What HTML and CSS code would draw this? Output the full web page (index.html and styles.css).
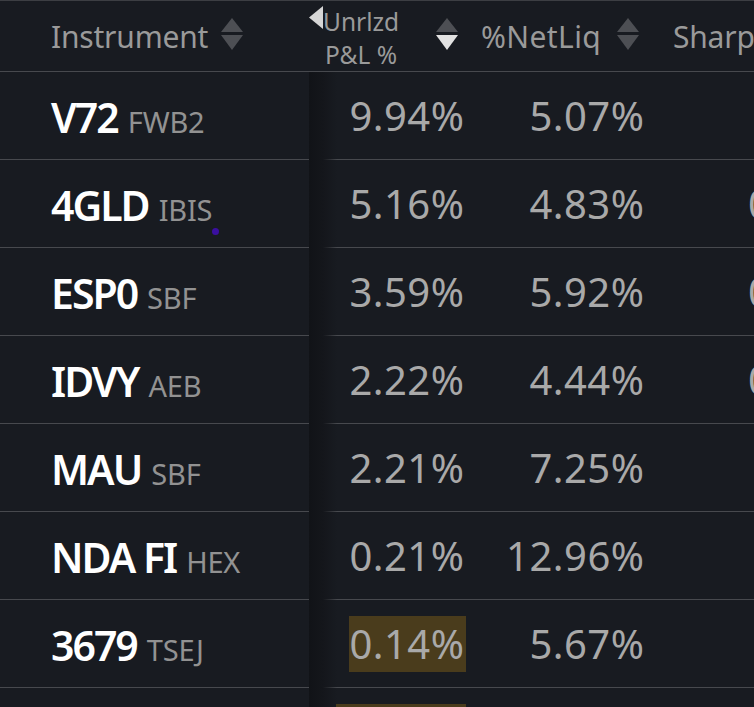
FILE: index.html
```html
<!DOCTYPE html>
<html>
<head>
<meta charset="utf-8">
<link rel="stylesheet" href="styles.css">
</head>
<body>
<div class="table">
  <div class="shadow"></div>
  <div class="row head">
    <div class="hcell first">
      <span class="htext">Instrument</span>
      <svg class="sort" width="22" height="33" viewBox="0 0 22 33"><polygon points="11,0 22,14 0,14" class="dim"/><polygon points="0,17 22,17 11,32" class="dim"/></svg>
    </div>
    <div class="hcell c1">
      <svg class="collapse" width="14" height="23" viewBox="0 0 14 23"><polygon points="14,0 14,23 0,11.5"/></svg>
      <span class="htext two">Unrlzd<br>P&amp;L %</span>
      <svg class="sort" width="22" height="33" viewBox="0 0 22 33"><polygon points="11,0 22,14 0,14" class="dim"/><polygon points="0,17 22,17 11,32" class="lit"/></svg>
    </div>
    <div class="hcell c2">
      <span class="htext">%NetLiq</span>
      <svg class="sort" width="22" height="33" viewBox="0 0 22 33"><polygon points="11,0 22,14 0,14" class="dim"/><polygon points="0,17 22,17 11,32" class="dim"/></svg>
    </div>
    <div class="hcell c3"><span class="htext">Sharpe</span></div>
  </div>

  <div class="row">
    <div class="cell first"><span class="sym">V72</span><span class="exch">FWB2</span></div>
    <div class="cell num"><span class="val">9.94%</span></div>
    <div class="cell num"><span class="val">5.07%</span></div>
    <div class="cell c3"></div>
  </div>
  <div class="row">
    <div class="cell first"><span class="sym">4GLD</span><span class="exch">IBIS</span><span class="dot"></span></div>
    <div class="cell num"><span class="val">5.16%</span></div>
    <div class="cell num"><span class="val">4.83%</span></div>
    <div class="cell c3"><span class="val3">0.38</span></div>
  </div>
  <div class="row">
    <div class="cell first"><span class="sym">ESP0</span><span class="exch">SBF</span></div>
    <div class="cell num"><span class="val">3.59%</span></div>
    <div class="cell num"><span class="val">5.92%</span></div>
    <div class="cell c3"><span class="val3">0.41</span></div>
  </div>
  <div class="row">
    <div class="cell first"><span class="sym">IDVY</span><span class="exch">AEB</span></div>
    <div class="cell num"><span class="val">2.22%</span></div>
    <div class="cell num"><span class="val">4.44%</span></div>
    <div class="cell c3"><span class="val3">0.27</span></div>
  </div>
  <div class="row">
    <div class="cell first"><span class="sym">MAU</span><span class="exch">SBF</span></div>
    <div class="cell num"><span class="val">2.21%</span></div>
    <div class="cell num"><span class="val">7.25%</span></div>
    <div class="cell c3"></div>
  </div>
  <div class="row">
    <div class="cell first"><span class="sym">NDA FI</span><span class="exch">HEX</span></div>
    <div class="cell num"><span class="val">0.21%</span></div>
    <div class="cell num"><span class="val">12.96%</span></div>
    <div class="cell c3"></div>
  </div>
  <div class="row">
    <div class="cell first"><span class="sym">3679</span><span class="exch">TSEJ</span></div>
    <div class="cell num"><span class="val hl">0.14%</span></div>
    <div class="cell num"><span class="val">5.67%</span></div>
    <div class="cell c3"></div>
  </div>
  <div class="row">
    <div class="cell first"><span class="sym">ABBN</span><span class="exch">EBS</span></div>
    <div class="cell num"><span class="val hl">-0.08%</span></div>
    <div class="cell num"><span class="val">6.12%</span></div>
    <div class="cell c3"></div>
  </div>
</div>
</body>
</html>
```

FILE: styles.css
```css
html, body {
  margin: 0;
  padding: 0;
  background: #181b21;
  overflow: hidden;
  height: 707px;
}
body {
  font-family: "Noto Sans", "Open Sans", sans-serif;
  color: #a8a8a8;
}
.table {
  position: relative;
  width: 754px;
}
.shadow {
  position: absolute;
  left: 309px;
  top: 72px;
  width: 28px;
  height: 700px;
  background: linear-gradient(to right, #111317 0%, #14161b 50%, rgba(24,27,33,0) 100%);
  pointer-events: none;
}
.row {
  display: grid;
  grid-template-columns: 309px 172px 178px 95px;
  height: 87px;
  border-bottom: 1px solid #47494e;
}
.row.head {
  height: 70px;
  border-top: 1px solid #3c3e43;
}
.hcell {
  display: flex;
  align-items: center;
  position: relative;
  white-space: nowrap;
}
.htext {
  font-size: 30px;
  color: #9a9a9a;
  letter-spacing: -0.2px;
}
.hcell.first {
  padding-left: 51px;
}
.sort {
  margin-top: -4px;
}
.hcell.first .sort {
  margin-left: 13px;
}
.sort .dim { fill: #4d4f54; }
.sort .lit { fill: #e2e2e2; }
.collapse {
  position: absolute;
  left: 0;
  top: 5px;
  fill: #d6d6d6;
}
.hcell.c1 {
  padding-left: 14px;
}
.htext.two {
  font-size: 24.5px;
  line-height: 33px;
  text-align: center;
  margin-top: 3px;
  letter-spacing: 0;
}
.hcell.c1 .sort {
  margin-left: 37px;
}
.hcell.c2 .htext {
  letter-spacing: 0.4px;
}
.hcell.c2 .sort {
  margin-left: 16px;
}
.hcell.c3 {
  padding-left: 14px;
}
.cell {
  display: flex;
  align-items: center;
  white-space: nowrap;
  position: relative;
}
.cell.first {
  padding-left: 51px;
  align-items: baseline;
  padding-top: 17px;
  box-sizing: border-box;
}
.sym {
  font-size: 41px;
  font-weight: 600;
  color: #ffffff;
  letter-spacing: -2px;
}
.exch {
  font-size: 29px;
  color: #929292;
  margin-left: 10px;
  letter-spacing: -0.2px;
}
.dot {
  position: absolute;
  left: 212px;
  top: 68px;
  width: 7px;
  height: 7px;
  border-radius: 50%;
  background: #3a0fa0;
}
.cell.num {
  justify-content: flex-end;
  padding-right: 13px;
}
.cell.num:nth-child(2) {
  padding-right: 15px;
}
.val {
  font-size: 40px;
  color: #a9a9a9;
  letter-spacing: 0.5px;
  line-height: 56px;
  padding: 0 1.5px 0 0;
}
.val.hl {
  background: #4a3c1c;
}
.val3 {
  font-size: 40px;
  color: #a9a9a9;
  margin-left: 89px;
}
```
